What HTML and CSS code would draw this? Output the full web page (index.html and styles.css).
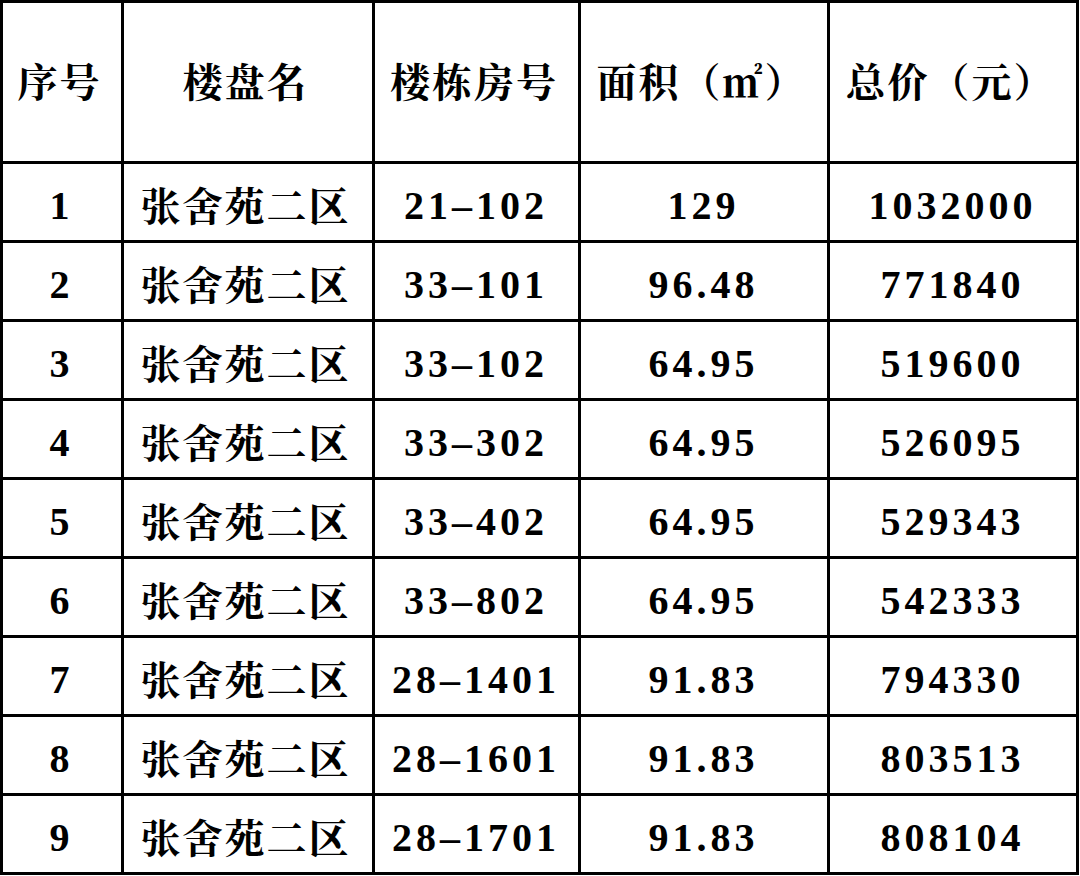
FILE: index.html
```html
<!DOCTYPE html>
<html lang="zh-CN">
<head>
<meta charset="utf-8">
<title>张舍苑二区房源</title>
<link rel="stylesheet" href="styles.css">
</head>
<body>
<div class="sheet">
  <div class="cell head">序号</div>
  <div class="cell head">楼盘名</div>
  <div class="cell head">楼栋房号</div>
  <div class="cell head">面积（㎡）</div>
  <div class="cell head">总价（元）</div>

  <div class="cell num">1</div><div class="cell cn">张舍苑二区</div><div class="cell num">21–102</div><div class="cell num">129</div><div class="cell num">1032000</div>
  <div class="cell num">2</div><div class="cell cn">张舍苑二区</div><div class="cell num">33–101</div><div class="cell num">96.48</div><div class="cell num">771840</div>
  <div class="cell num">3</div><div class="cell cn">张舍苑二区</div><div class="cell num">33–102</div><div class="cell num">64.95</div><div class="cell num">519600</div>
  <div class="cell num">4</div><div class="cell cn">张舍苑二区</div><div class="cell num">33–302</div><div class="cell num">64.95</div><div class="cell num">526095</div>
  <div class="cell num">5</div><div class="cell cn">张舍苑二区</div><div class="cell num">33–402</div><div class="cell num">64.95</div><div class="cell num">529343</div>
  <div class="cell num">6</div><div class="cell cn">张舍苑二区</div><div class="cell num">33–802</div><div class="cell num">64.95</div><div class="cell num">542333</div>
  <div class="cell num">7</div><div class="cell cn">张舍苑二区</div><div class="cell num">28–1401</div><div class="cell num">91.83</div><div class="cell num">794330</div>
  <div class="cell num">8</div><div class="cell cn">张舍苑二区</div><div class="cell num">28–1601</div><div class="cell num">91.83</div><div class="cell num">803513</div>
  <div class="cell num">9</div><div class="cell cn">张舍苑二区</div><div class="cell num">28–1701</div><div class="cell num">91.83</div><div class="cell num">808104</div>
</div>
</body>
</html>
```
FILE: styles.css
```css
html, body {
  margin: 0;
  padding: 0;
  background: #ffffff;
}
.sheet {
  width: 1073px;
  padding: 3px;
  background: #000000;
  display: grid;
  grid-template-columns: 118px 248px 203px 246px 246px;
  grid-template-rows: 158px repeat(9, 76px);
  gap: 3px;
}
.cell {
  background: #ffffff;
  display: flex;
  align-items: center;
  justify-content: center;
  color: #000000;
  font-weight: bold;
  white-space: nowrap;
}
.head, .cn {
  font-family: "Noto Serif CJK SC", "Noto Sans CJK SC", serif;
  font-size: 40px;
  letter-spacing: 2px;
  padding-right: 5px;
}
.head {
  padding-bottom: 6px;
}
.cn {
  padding-top: 2px;
}
.num {
  font-family: "Liberation Serif", "Noto Serif CJK SC", serif;
  font-size: 40px;
  letter-spacing: 4px;
  padding-right: 1px;
  padding-top: 6px;
}
```
